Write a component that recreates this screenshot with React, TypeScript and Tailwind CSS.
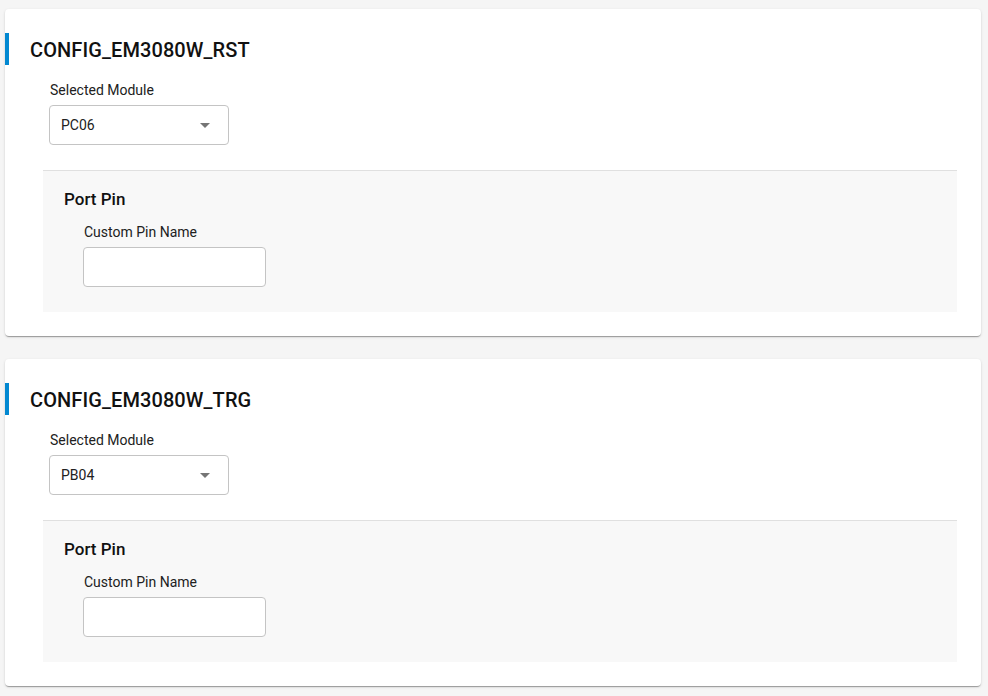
import React from "react";

function Card({ title, module }: { title: string; module: string }) {
  return (
    <div className="ml-[5px] w-[976px] rounded-[4px] bg-white shadow-[0_2px_1px_-1px_rgba(0,0,0,0.2),0_1px_1px_0_rgba(0,0,0,0.14),0_1px_3px_0_rgba(0,0,0,0.12)] pt-[24px] pb-[24px]">
      <div className="flex items-center h-[32px]">
        <div className="w-[4px] h-[32px] bg-[#0288d1]" />
        <div className="ml-[21px] pt-[2px] text-[20px] font-medium text-[#111] tracking-[0.1px]">{title}</div>
      </div>
      <div className="pl-[44px] mt-[15px]">
        <div className="text-[14px] leading-[20px] text-[#212121] pl-[1px]">Selected Module</div>
        <div className="mt-[5px] w-[180px] h-[40px] rounded-[4px] border border-[#c4c4c4] flex items-center justify-between pl-[11px] pr-[18px]">
          <span className="text-[14px] text-[#212121]">{module}</span>
          <svg width="10" height="5" viewBox="0 0 10 5">
            <path d="M0 0 L5 5 L10 0 Z" fill="#757575" />
          </svg>
        </div>
      </div>
      <div className="ml-[38px] mr-[24px] mt-[25px] bg-[#f8f8f8] border-t border-[#e0e0e0] pt-[16px] pb-[25px] pl-[21px]">
        <div className="text-[17px] leading-[24px] font-medium text-[#111]">Port Pin</div>
        <div className="pl-[19px] mt-[11px]">
          <div className="text-[14px] leading-[20px] text-[#212121] pl-[1px]">Custom Pin Name</div>
          <div className="mt-[5px] w-[183px] h-[40px] rounded-[4px] border border-[#c4c4c4] bg-white" />
        </div>
      </div>
    </div>
  );
}

export default function App() {
  return (
    <div className="w-[988px] h-[696px] bg-[#f5f5f5] pt-[9px] flex flex-col gap-[23px] overflow-hidden" style={{ fontFamily: "Roboto, 'Liberation Sans', sans-serif" }}>
      <Card title="CONFIG_EM3080W_RST" module="PC06" />
      <Card title="CONFIG_EM3080W_TRG" module="PB04" />
    </div>
  );
}
